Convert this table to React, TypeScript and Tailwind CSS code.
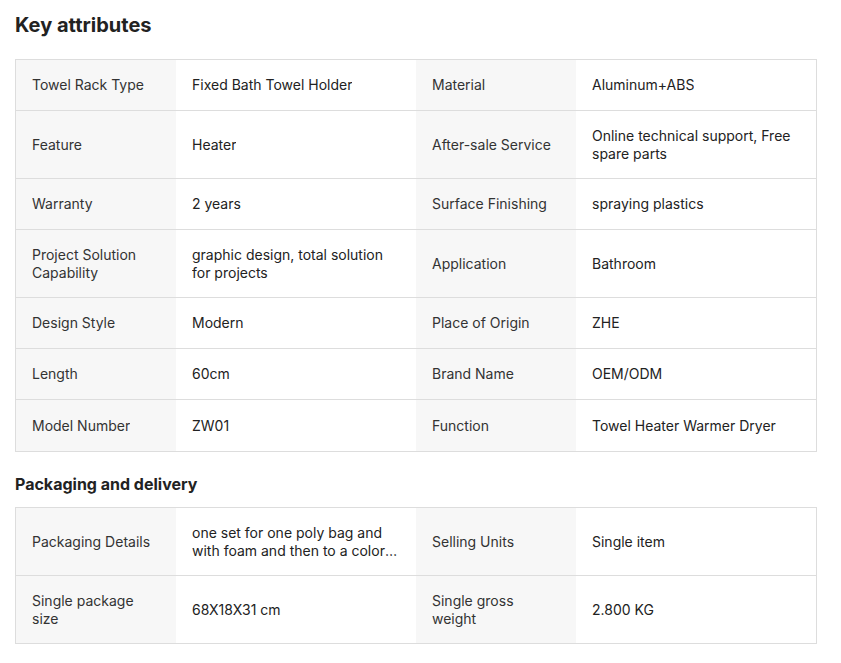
const keyAttributes: [string, string][] = [
  ["Towel Rack Type", "Fixed Bath Towel Holder"],
  ["Material", "Aluminum+ABS"],
  ["Feature", "Heater"],
  ["After-sale Service", "Online technical support, Free spare parts"],
  ["Warranty", "2 years"],
  ["Surface Finishing", "spraying plastics"],
  ["Project Solution Capability", "graphic design, total solution for projects"],
  ["Application", "Bathroom"],
  ["Design Style", "Modern"],
  ["Place of Origin", "ZHE"],
  ["Length", "60cm"],
  ["Brand Name", "OEM/ODM"],
  ["Model Number", "ZW01"],
  ["Function", "Towel Heater Warmer Dryer"],
]

const packaging: [string, string][] = [
  ["Packaging Details", "one set for one poly bag and with foam and then to a color box, 10pcs/carton"],
  ["Selling Units", "Single item"],
  ["Single package size", "68X18X31 cm"],
  ["Single gross weight", "2.800 KG"],
]

function AttrTable({ items }: { items: [string, string][] }) {
  const rows: [string, string][][] = []
  for (let i = 0; i < items.length; i += 2) rows.push(items.slice(i, i + 2))

  return (
    <div className="w-[802px] border border-[#dddddd]">
      {rows.map((row, r) => (
        <div
          key={r}
          className={`grid grid-cols-[160px_240px_160px_240px] min-h-[51px] ${r < rows.length - 1 ? "border-b border-[#dddddd]" : ""}`}
        >
          {row.map(([label, value]) => (
            <div key={label} className="contents">
              <div className="bg-[#f7f7f7] px-4 py-4 flex items-center text-[#333333]">
                <span className="line-clamp-2">{label}</span>
              </div>
              <div className="px-4 py-4 flex items-center text-[#222222]">
                <span className="line-clamp-2">{value}</span>
              </div>
            </div>
          ))}
        </div>
      ))}
    </div>
  )
}

export default function App() {
  return (
    <div
      className="bg-white min-h-screen px-[15px] pt-[11px] text-sm leading-[17.5px]"
      style={{ fontFamily: "Inter, 'Noto Sans', sans-serif" }}
    >
      <h2 className="text-[20px] leading-[28px] font-bold text-[#222222] mb-[20px]">Key attributes</h2>
      <AttrTable items={keyAttributes} />

      <h3 className="text-[16px] leading-[24px] font-bold text-[#222222] mt-[20px] mb-[11px]">
        Packaging and delivery
      </h3>
      <AttrTable items={packaging} />
    </div>
  )
}
